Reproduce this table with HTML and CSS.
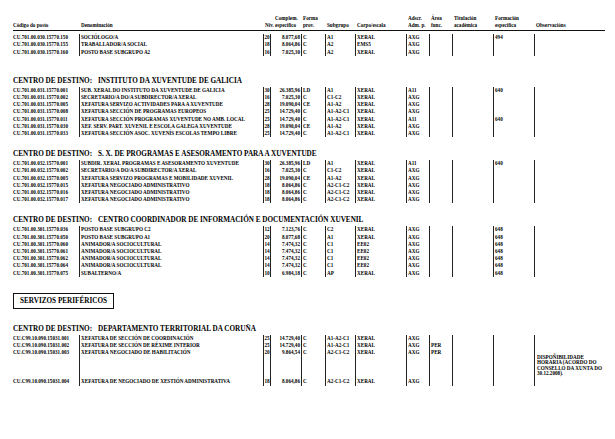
FILE: index.html
```html
<!DOCTYPE html>
<html lang="gl">
<head>
<meta charset="utf-8">
<title>RPT</title>
<link rel="stylesheet" href="styles.css">
</head>
<body>
<div class="page">
  <div class="head">
    <table class="grid">
      <colgroup><col class="c-cod"><col class="c-den"><col class="c-niv"><col class="c-comp"><col class="c-forma"><col class="c-sub"><col class="c-corpo"><col class="c-adsc"><col class="c-area"><col class="c-tit"><col class="c-form"><col class="c-obs"></colgroup>
      <tr>
        <th class="h-cod"><br>Código do posto</th>
        <th class="h-den"><br>Denominación</th>
        <th class="h-niv"><br>Niv.</th>
        <th class="h-comp">Complem.<br>especifico</th>
        <th>Forma<br>prov.</th>
        <th><br>Subgrupo</th>
        <th><br>Corpo/escala</th>
        <th>Adscr.<br>Adm. p.</th>
        <th>Área<br>func.</th>
        <th>Titulación<br>académica</th>
        <th>Formación<br>especifica</th>
        <th><br>Observacións</th>
      </tr>
    </table>
  </div>

  <table class="grid data first">
    <colgroup><col class="c-cod"><col class="c-den"><col class="c-niv"><col class="c-comp"><col class="c-forma"><col class="c-sub"><col class="c-corpo"><col class="c-adsc"><col class="c-area"><col class="c-tit"><col class="c-form"><col class="c-obs"></colgroup>
    <tr><td>CU.701.00.030.15770.150</td><td>SOCIÓLOGO/A</td><td class="n">20</td><td class="m">8.077,68</td><td>C</td><td>A1</td><td>XERAL</td><td>AXG</td><td></td><td></td><td>494</td><td></td></tr>
    <tr><td>CU.701.00.030.15770.155</td><td>TRABALLADOR/A SOCIAL</td><td class="n">18</td><td class="m">8.064,86</td><td>C</td><td>A2</td><td>EMS5</td><td>AXG</td><td></td><td></td><td></td><td></td></tr>
    <tr><td>CU.701.00.030.15770.160</td><td>POSTO BASE SUBGRUPO A2</td><td class="n">16</td><td class="m">7.025,30</td><td>C</td><td>A2</td><td>XERAL</td><td>AXG</td><td></td><td></td><td></td><td></td></tr>
  </table>

  <div class="center c1"><span class="lab">CENTRO DE DESTINO:</span>INSTITUTO DA XUVENTUDE DE GALICIA</div>
  <table class="grid data">
    <colgroup><col class="c-cod"><col class="c-den"><col class="c-niv"><col class="c-comp"><col class="c-forma"><col class="c-sub"><col class="c-corpo"><col class="c-adsc"><col class="c-area"><col class="c-tit"><col class="c-form"><col class="c-obs"></colgroup>
    <tr><td>CU.701.00.031.15770.001</td><td>SUB. XERAL DO INSTITUTO DA XUVENTUDE DE GALICIA</td><td class="n">30</td><td class="m">26.385,96</td><td>LD</td><td>A1</td><td>XERAL</td><td>A11</td><td></td><td></td><td>640</td><td></td></tr>
    <tr><td>CU.701.00.031.15770.002</td><td>SECRETARIO/A DO/A SUBDIRECTOR/A XERAL</td><td class="n">16</td><td class="m">7.025,30</td><td>C</td><td>C1-C2</td><td>XERAL</td><td>AXG</td><td></td><td></td><td></td><td></td></tr>
    <tr><td>CU.701.00.031.15770.005</td><td>XEFATURA SERVIZO ACTIVIDADES PARA A XUVENTUDE</td><td class="n">28</td><td class="m">19.090,04</td><td>CE</td><td>A1-A2</td><td>XERAL</td><td>AXG</td><td></td><td></td><td></td><td></td></tr>
    <tr><td>CU.701.00.031.15770.008</td><td>XEFATURA SECCIÓN DE PROGRAMAS EUROPEOS</td><td class="n">25</td><td class="m">14.729,40</td><td>C</td><td>A1-A2-C1</td><td>XERAL</td><td>AXG</td><td></td><td></td><td></td><td></td></tr>
    <tr><td>CU.701.00.031.15770.011</td><td>XEFATURA SECCIÓN PROGRAMAS XUVENTUDE NO AMB. LOCAL</td><td class="n">25</td><td class="m">14.729,40</td><td>C</td><td>A1-A2-C1</td><td>XERAL</td><td>A11</td><td></td><td></td><td>640</td><td></td></tr>
    <tr><td>CU.701.00.031.15770.030</td><td>XEF. SERV. PART. XUVENIL E ESCOLA GALEGA XUVENTUDE</td><td class="n">28</td><td class="m">19.090,04</td><td>CE</td><td>A1-A2</td><td>XERAL</td><td>AXG</td><td></td><td></td><td></td><td></td></tr>
    <tr><td>CU.701.00.031.15770.033</td><td>XEFATURA SECCIÓN ASOC. XUVENÍS ESCOLAS TEMPO LIBRE</td><td class="n">25</td><td class="m">14.729,40</td><td>C</td><td>A1-A2-C1</td><td>XERAL</td><td>AXG</td><td></td><td></td><td></td><td></td></tr>
  </table>

  <div class="center"><span class="lab">CENTRO DE DESTINO:</span>S. X. DE PROGRAMAS E ASESORAMENTO PARA A XUVENTUDE</div>
  <table class="grid data">
    <colgroup><col class="c-cod"><col class="c-den"><col class="c-niv"><col class="c-comp"><col class="c-forma"><col class="c-sub"><col class="c-corpo"><col class="c-adsc"><col class="c-area"><col class="c-tit"><col class="c-form"><col class="c-obs"></colgroup>
    <tr><td>CU.701.00.032.15770.001</td><td>SUBDIR. XERAL PROGRAMAS E ASESORAMENTO XUVENTUDE</td><td class="n">30</td><td class="m">26.385,96</td><td>LD</td><td>A1</td><td>XERAL</td><td>A11</td><td></td><td></td><td>640</td><td></td></tr>
    <tr><td>CU.701.00.032.15770.002</td><td>SECRETARIO/A DO/A SUBDIRECTOR/A XERAL</td><td class="n">16</td><td class="m">7.025,30</td><td>C</td><td>C1-C2</td><td>XERAL</td><td>AXG</td><td></td><td></td><td></td><td></td></tr>
    <tr><td>CU.701.00.032.15770.005</td><td>XEFATURA SERVIZO PROGRAMAS E MOBILIDADE XUVENIL</td><td class="n">28</td><td class="m">19.090,04</td><td>CE</td><td>A1-A2</td><td>XERAL</td><td>AXG</td><td></td><td></td><td></td><td></td></tr>
    <tr><td>CU.701.00.032.15770.015</td><td>XEFATURA NEGOCIADO ADMINISTRATIVO</td><td class="n">18</td><td class="m">8.064,86</td><td>C</td><td>A2-C1-C2</td><td>XERAL</td><td>AXG</td><td></td><td></td><td></td><td></td></tr>
    <tr><td>CU.701.00.032.15770.016</td><td>XEFATURA NEGOCIADO ADMINISTRATIVO</td><td class="n">18</td><td class="m">8.064,86</td><td>C</td><td>A2-C1-C2</td><td>XERAL</td><td>AXG</td><td></td><td></td><td></td><td></td></tr>
    <tr><td>CU.701.00.032.15770.017</td><td>XEFATURA NEGOCIADO ADMINISTRATIVO</td><td class="n">18</td><td class="m">8.064,86</td><td>C</td><td>A2-C1-C2</td><td>XERAL</td><td>AXG</td><td></td><td></td><td></td><td></td></tr>
  </table>

  <div class="center"><span class="lab">CENTRO DE DESTINO:</span>CENTRO COORDINADOR DE INFORMACIÓN E DOCUMENTACIÓN XUVENIL</div>
  <table class="grid data">
    <colgroup><col class="c-cod"><col class="c-den"><col class="c-niv"><col class="c-comp"><col class="c-forma"><col class="c-sub"><col class="c-corpo"><col class="c-adsc"><col class="c-area"><col class="c-tit"><col class="c-form"><col class="c-obs"></colgroup>
    <tr><td>CU.701.00.301.15770.036</td><td>POSTO BASE SUBGRUPO C2</td><td class="n">12</td><td class="m">7.123,76</td><td>C</td><td>C2</td><td>XERAL</td><td>AXG</td><td></td><td></td><td>648</td><td></td></tr>
    <tr><td>CU.701.00.301.15770.050</td><td>POSTO BASE SUBGRUPO A1</td><td class="n">20</td><td class="m">8.077,68</td><td>C</td><td>A1</td><td>XERAL</td><td>AXG</td><td></td><td></td><td>648</td><td></td></tr>
    <tr><td>CU.701.00.301.15770.060</td><td>ANIMADOR/A SOCIOCULTURAL</td><td class="n">14</td><td class="m">7.474,32</td><td>C</td><td>C1</td><td>EE02</td><td>AXG</td><td></td><td></td><td>648</td><td></td></tr>
    <tr><td>CU.701.00.301.15770.061</td><td>ANIMADOR/A SOCIOCULTURAL</td><td class="n">14</td><td class="m">7.474,32</td><td>C</td><td>C1</td><td>EE02</td><td>AXG</td><td></td><td></td><td>648</td><td></td></tr>
    <tr><td>CU.701.00.301.15770.062</td><td>ANIMADOR/A SOCIOCULTURAL</td><td class="n">14</td><td class="m">7.474,32</td><td>C</td><td>C1</td><td>EE02</td><td>AXG</td><td></td><td></td><td>648</td><td></td></tr>
    <tr><td>CU.701.00.301.15770.064</td><td>ANIMADOR/A SOCIOCULTURAL</td><td class="n">14</td><td class="m">7.474,32</td><td>C</td><td>C1</td><td>EE02</td><td>AXG</td><td></td><td></td><td>648</td><td></td></tr>
    <tr><td>CU.701.00.301.15770.075</td><td>SUBALTERNO/A</td><td class="n">10</td><td class="m">6.984,18</td><td>C</td><td>AP</td><td>XERAL</td><td>AXG</td><td></td><td></td><td>648</td><td></td></tr>
  </table>

  <div class="zone">SERVIZOS PERIFÉRICOS</div>

  <div class="center"><span class="lab">CENTRO DE DESTINO:</span>DEPARTAMENTO TERRITORIAL DA CORUÑA</div>
  <table class="grid data">
    <colgroup><col class="c-cod"><col class="c-den"><col class="c-niv"><col class="c-comp"><col class="c-forma"><col class="c-sub"><col class="c-corpo"><col class="c-adsc"><col class="c-area"><col class="c-tit"><col class="c-form"><col class="c-obs"></colgroup>
    <tr><td>CU.C99.10.090.15031.001</td><td>XEFATURA DE SECCIÓN DE COORDINACIÓN</td><td class="n">25</td><td class="m">14.729,40</td><td>C</td><td>A1-A2-C1</td><td>XERAL</td><td>AXG</td><td></td><td></td><td></td><td></td></tr>
    <tr><td>CU.C99.10.090.15031.002</td><td>XEFATURA DE SECCIÓN DE RÉXIME INTERIOR</td><td class="n">25</td><td class="m">14.729,40</td><td>C</td><td>A1-A2-C1</td><td>XERAL</td><td>AXG</td><td>PER</td><td></td><td></td><td></td></tr>
    <tr class="tall"><td>CU.C99.10.090.15031.003</td><td>XEFATURA NEGOCIADO DE HABILITACIÓN</td><td class="n">20</td><td class="m">9.864,54</td><td>C</td><td>A2-C1-C2</td><td>XERAL</td><td>AXG</td><td>PER</td><td></td><td></td><td class="obs">DISPOÑIBILIDADE<br>HORARIA (ACORDO DO<br>CONSELLO DA XUNTA DO<br>30.12.2008).</td></tr>
    <tr><td>CU.C99.10.090.15031.004</td><td>XEFATURA DE NEGOCIADO DE XESTIÓN ADMINISTRATIVA</td><td class="n">18</td><td class="m">8.064,86</td><td>C</td><td>A2-C1-C2</td><td>XERAL</td><td>AXG</td><td></td><td></td><td></td><td></td></tr>
  </table>
</div>
</body>
</html>
```
FILE: styles.css
```css
html, body {
  margin: 0;
  padding: 0;
  background: #fff;
}
body {
  font-family: "Liberation Serif", "Times New Roman", serif;
  color: #000;
  font-weight: bold;
}
.page {
  padding: 15px 0 0 13px;
  width: 592px;
}
.grid {
  width: 592px;
  table-layout: fixed;
  border-collapse: separate;
  border-spacing: 0;
}
.c-cod { width: 66px; }
.c-den { width: 184px; }
.c-niv { width: 7px; }
.c-comp { width: 31px; }
.c-forma { width: 24px; }
.c-sub { width: 30px; }
.c-corpo { width: 51px; }
.c-adsc { width: 23px; }
.c-area { width: 23px; }
.c-tit { width: 41px; }
.c-form { width: 41px; }
.c-obs { width: 71px; }

.head {
  border-bottom: 1px solid #111;
  padding-bottom: 1.5px;
}
.head th {
  font-size: 5.15px;
  line-height: 6.5px;
  text-align: left;
  vertical-align: bottom;
  padding: 0 0 0 2px;
  white-space: nowrap;
  overflow: visible;
}
.head th.h-cod { padding-left: 0; }
.head th.h-niv { padding-left: 2px; }
.head th.h-comp { padding-left: 5px; }

.data {
  font-size: 5.15px;
}
.data.first { margin-top: 3.6px; }
.data td {
  height: 7.2px;
  line-height: 7.2px;
  padding: 0 0 0 1px;
  vertical-align: top;
  white-space: nowrap;
  overflow: visible;
  border-left: 1px solid #222;
}
.data td:first-child {
  border-left: none;
  padding-left: 0;
}
.data td.n {
  text-align: center;
  padding: 0;
}
.data td.m {
  text-align: right;
  padding: 0 1px 0 0;
}
.data td.obs {
  line-height: 5.3px;
  padding: 6px 0 2px 2px;
}

.center {
  font-size: 7.2px;
  line-height: 8px;
  margin: 13px 0 2px;
  white-space: nowrap;
}
.center.c1 { margin-top: 21px; }
.center .lab {
  display: inline-block;
  width: 85px;
}

.zone {
  width: max-content;
  margin-top: 16px;
  margin-bottom: 16px;
  border: 1px solid #111;
  padding: 3px 6px;
  font-size: 7.2px;
  line-height: 8px;
}
```
